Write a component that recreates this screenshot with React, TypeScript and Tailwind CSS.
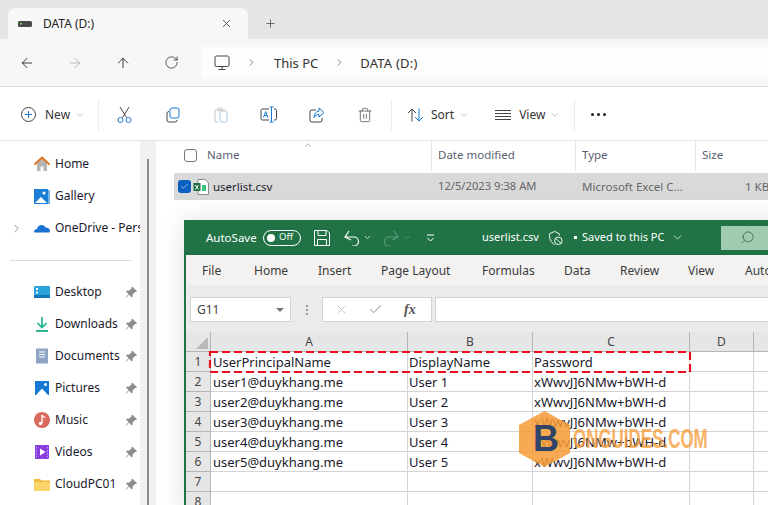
import React from "react";
import { ArrowLeft, ArrowRight, ArrowUp, RotateCw, ChevronRight, ChevronDown, ChevronUp, X, Plus, Trash2, Search, Check } from "lucide-react";

const Chev = () => <ChevronDown size={10} strokeWidth={1.5} className="text-[#9a9a9a]" />;

const Tile = ({ children }: { children?: React.ReactNode }) => (
  <svg width="18" height="18" viewBox="0 0 18 18" fill="none">{children}</svg>
);

const HomeI = () => (
  <Tile>
    <path d="M4 8v8h10V8L9 3z" fill="#b8b4b0" />
    <path d="M7.500 16v-4.500h3V16z" fill="#fff" />
    <path d="M1.500 9.500L9 2.500l7.500 7" stroke="#e0701c" strokeWidth="1.800" fill="none" />
  </Tile>
);
const GalleryI = () => (
  <Tile>
    <rect x="1" y="2" width="14" height="15" fill="#1c7ed6" />
    <path d="M16 3v14" stroke="#1c7ed6" strokeWidth="1.200" />
    <path d="M2 16l6-6 6 6z" fill="#fff" />
    <circle cx="11" cy="6" r="1.500" fill="#fff" />
  </Tile>
);
const CloudI = () => (
  <Tile>
    <path d="M1 13c0-2 1.500-3 3-3 .5-2.500 2.500-4 4.500-4 2 0 3.500 1 4 2.500 2.500 0 4.500 1.500 4.500 3.500 0 .5-.2 1-.5 1.500H1.500z" fill="#1a73d1" />
  </Tile>
);
const DesktopI = () => (
  <Tile>
    <rect x="1" y="3" width="16" height="12" rx="1" fill="#2aa4d8" />
    <rect x="1" y="12" width="16" height="3" fill="#1478b8" />
    <rect x="3" y="5" width="2" height="2" fill="#fff" />
    <rect x="3" y="8.500" width="2" height="2" fill="#dff" />
  </Tile>
);
const DownloadI = () => (
  <Tile>
    <path d="M9 2v10M4.500 8L9 12.500 13.500 8" stroke="#17b08a" strokeWidth="1.600" />
    <path d="M3 16h12" stroke="#17b08a" strokeWidth="1.800" />
  </Tile>
);
const DocsI = () => (
  <Tile>
    <rect x="3" y="1.500" width="12" height="15" fill="#8ea6c4" />
    <path d="M6 5h6M6 7.500h6M6 10h6" stroke="#fff" />
  </Tile>
);
const PicturesI = () => (
  <Tile>
    <rect x="2" y="2" width="14" height="14" fill="#1479d4" />
    <path d="M3 16l6-6.500L15 16z" fill="#fff" />
    <circle cx="12.500" cy="5.500" r="1.500" fill="#fff" />
  </Tile>
);
const MusicI = () => (
  <Tile>
    <circle cx="9" cy="9" r="8" fill="#d9695c" />
    <path d="M9 4v8" stroke="#fff" strokeWidth="1.400" />
    <circle cx="7.500" cy="12.500" r="1.800" fill="#fff" />
    <path d="M9 4c1 1.500 2.500 1.500 3 3" stroke="#fff" strokeWidth="1.200" />
  </Tile>
);
const VideosI = () => (
  <Tile>
    <rect x="2" y="2" width="14" height="14" rx="1" fill="#8a3ee0" />
    <path d="M7 5.500v7l5.500-3.500z" fill="#fff" />
    <path d="M3.500 4v10M14.500 4v10" stroke="#c9a0f0" strokeDasharray="1.500 1.500" />
  </Tile>
);
const FolderI = () => (
  <Tile>
    <path d="M1 4h6l1.500 1.500H17V15a1 1 0 01-1 1H2a1 1 0 01-1-1z" fill="#f0b93a" />
    <rect x="1" y="7" width="16" height="9" rx="1" fill="#fad56a" />
  </Tile>
);
const PinI = () => (
  <svg width="13" height="13" viewBox="0 0 13 13" fill="#8c8c8c" className="shrink-0">
    <path d="M7.500 .8l4.700 4.700-1.300.6-.8-.2-2.500 2.500.1 2-1 1L4 8.700 1.500 11.500l-.4-.1L1 11l2.600-2.700L1.100 5.600l1-1 2 .1 2.500-2.500-.2-.8z" />
  </svg>
);

const side1 = [
  { n: "Home", i: <HomeI /> },
  { n: "Gallery", i: <GalleryI /> },
  { n: "OneDrive - Personal", i: <CloudI />, c: true },
];
const side2 = [
  { n: "Desktop", i: <DesktopI /> },
  { n: "Downloads", i: <DownloadI /> },
  { n: "Documents", i: <DocsI /> },
  { n: "Pictures", i: <PicturesI /> },
  { n: "Music", i: <MusicI /> },
  { n: "Videos", i: <VideosI /> },
  { n: "CloudPC01", i: <FolderI /> },
];

const SideRow = ({ n, i, c, pin }: { n: string; i: React.ReactNode; c?: boolean; pin?: boolean }) => (
  <div className="flex h-8 items-center">
    <div className="flex w-[33px] shrink-0 justify-center">
      {c && <ChevronRight size={13} strokeWidth={1.5} className="text-[#777]" />}
    </div>
    <div className="flex w-[22px] shrink-0">{i}</div>
    <span className="min-w-0 flex-1 overflow-hidden whitespace-nowrap text-[12px] text-[#1a1a2b]">{n}</span>
    {pin && <span className="mx-[2px] flex"><PinI /></span>}
  </div>
);

const rows: string[][] = [
  ["UserPrincipalName", "DisplayName", "Password"],
  ["user1@duykhang.me", "User 1", "xWwvJ]6NMw+bWH-d"],
  ["user2@duykhang.me", "User 2", "xWwvJ]6NMw+bWH-d"],
  ["user3@duykhang.me", "User 3", "xWwvJ]6NMw+bWH-d"],
  ["user4@duykhang.me", "User 4", "xWwvJ]6NMw+bWH-d"],
  ["user5@duykhang.me", "User 5", "xWwvJ]6NMw+bWH-d"],
  ["", "", ""],
  ["", "", ""],
];

const ribbon = [
  ["File", "w-[52px] ml-[16px]"],
  ["Home", "w-[64px]"],
  ["Insert", "w-[63px]"],
  ["Page Layout", "w-[101px]"],
  ["Formulas", "w-[82px]"],
  ["Data", "w-[56px]"],
  ["Review", "w-[68px]"],
  ["View", "w-[57px]"],
  ["Automate", "w-[70px]"],
];

export default function App() {
  return (
    <div className="relative flex h-[505px] w-[768px] flex-col overflow-hidden bg-white font-['Noto_Sans',sans-serif]">
      {/* tab strip */}
      <div className="flex h-[39px] shrink-0 items-end bg-[#e6e6e6] pl-2">
        <div className="flex h-[31px] w-[240px] items-center rounded-t-lg bg-[#f8f8f8] pl-[10px] pr-[15px]">
          <svg width="14" height="6" viewBox="0 0 14 6" className="mr-[11px]">
            <rect width="14" height="6" rx="1.500" fill="#4a4a4a" />
            <rect x="2" y="2" width="2" height="1.500" fill="#6fe04a" />
          </svg>
          <span className="flex-1 text-[12px] text-[#222]">DATA (D:)</span>
          <X size={13} strokeWidth={1.3} className="text-[#222]" />
        </div>
        <div className="ml-4 flex h-[31px] items-center">
          <Plus size={13} strokeWidth={1.2} className="text-[#333]" />
        </div>
      </div>

      {/* nav */}
      <div className="flex h-[48px] shrink-0 items-center border-b border-[#dcdcdc] bg-[#f7f7f7]">
        <div className="flex w-[201px] items-center">
          <ArrowLeft size={16} strokeWidth={1.3} className="ml-[19px] text-[#222]" />
          <ArrowRight size={16} strokeWidth={1.3} className="ml-[32px] text-[#b0b0b0]" />
          <ArrowUp size={16} strokeWidth={1.3} className="ml-[32px] text-[#222]" />
          <RotateCw size={15} strokeWidth={1.3} className="ml-[33px] text-[#333]" />
        </div>
        <div className="flex h-8 flex-1 items-center bg-[#fdfdfd] pl-[13px] text-[13px] text-[#333]">
          <svg width="16" height="16" viewBox="0 0 16 16" fill="none" stroke="#444" strokeWidth="1">
            <rect x="1" y="1" width="14" height="10.500" rx="1.500" />
            <path d="M8 11.500V14M4.500 14.500h7" />
          </svg>
          <ChevronRight size={11} strokeWidth={1.3} className="ml-[16px] text-[#333]" />
          <span className="ml-[17px] pt-[2px]">This PC</span>
          <ChevronRight size={11} strokeWidth={1.3} className="ml-[16px] text-[#333]" />
          <span className="ml-[15px] pt-[2px] tracking-[0.2px]">DATA (D:)</span>
        </div>
      </div>

      {/* command bar */}
      <div className="flex h-[54px] shrink-0 items-center border-b border-[#e4e4e4] bg-white pt-[2px] text-[12px] text-[#333]">
        <div className="flex h-[32px] w-[99px] items-center border-r border-[#ececec] pl-[21px]">
          <svg width="15" height="15" viewBox="0 0 15 15" fill="none">
            <circle cx="7.500" cy="7.500" r="7" stroke="#444" />
            <path d="M7.500 4v7M4 7.500h7" stroke="#1a7ad4" />
          </svg>
          <span className="ml-[9px]">New</span>
          <span className="ml-[5px]"><Chev /></span>
        </div>
        <svg width="15" height="17" viewBox="0 0 15 17" fill="none" className="ml-[18px]">
          <path d="M3 1l6.500 10.500M12 1L5.500 11.500" stroke="#444" />
          <circle cx="3.500" cy="14" r="2.500" stroke="#1a7ad4" />
          <circle cx="11.500" cy="14" r="2.500" stroke="#1a7ad4" />
        </svg>
        <svg width="16" height="16" viewBox="0 0 16 16" fill="none" className="ml-[33px]">
          <rect x="5" y="1" width="9" height="10" rx="2" stroke="#1a7ad4" />
          <path d="M4 4.500a2 2 0 00-2 2V13a2 2 0 002 2h6a2 2 0 002-2" stroke="#444" />
        </svg>
        <svg width="16" height="16" viewBox="0 0 16 16" fill="none" className="ml-[32px]">
          <rect x="7" y="4" width="7" height="11" rx="1.500" stroke="#a8cbe8" />
          <path d="M5 15H2V3h10M5 1h4v2.500H5z" stroke="#c8c8c8" />
        </svg>
        <svg width="18" height="18" viewBox="0 0 18 18" fill="none" className="ml-[31px]">
          <path d="M9 3H2.500a1.500 1.500 0 00-1.500 1.500v8A1.500 1.500 0 002.500 14H9M14 3h1a1.500 1.500 0 011.500 1.500v8A1.500 1.500 0 0115 14h-1" stroke="#444" />
          <path d="M11.500 1v15M9.500 1h4M9.500 16h4" stroke="#1a7ad4" />
          <path d="M3.500 11.500l2.200-6 2.200 6M4.300 9.500h2.800" stroke="#1a7ad4" />
        </svg>
        <svg width="16" height="16" viewBox="0 0 16 16" fill="none" className="ml-[31px]">
          <path d="M7 3H3a2 2 0 00-2 2v8a2 2 0 002 2h8a2 2 0 002-2v-2" stroke="#444" />
          <path d="M10 1l5 4.500L10 10V7.500c-2.500 0-4 1-5 3 0-3.500 2-6 5-6.500z" stroke="#1a7ad4" />
        </svg>
        <Trash2 size={16} strokeWidth={1.1} className="ml-[32px] text-[#444]" />
        <div className="ml-[18px] flex h-[32px] w-[184px] items-center border-x border-[#ececec]">
          <svg width="17" height="14" viewBox="0 0 17 14" fill="none" className="ml-[15px]">
            <path d="M5 13.500V1M1 5l4-4 4 4" stroke="#444" />
            <path d="M12 .5V13M8 9l4 4 4-4" stroke="#1a7ad4" />
          </svg>
          <span className="ml-[7px]">Sort</span>
          <span className="ml-[5px]"><Chev /></span>
          <svg width="16" height="10" viewBox="0 0 16 10" stroke="#444" className="ml-[26px]">
            <path d="M0 .5h16M0 3.500h16M0 6.500h16M0 9.500h16" />
          </svg>
          <span className="ml-[8px]">View</span>
          <span className="ml-[5px]"><Chev /></span>
        </div>
        <div className="ml-[16px] flex gap-[3px]">
          <span className="h-[3px] w-[3px] rounded-full bg-[#222]" />
          <span className="h-[3px] w-[3px] rounded-full bg-[#222]" />
          <span className="h-[3px] w-[3px] rounded-full bg-[#222]" />
        </div>
      </div>

      {/* body */}
      <div className="flex min-h-0 flex-1">
        <div className="w-[140px] shrink-0 pt-[7px]">
          {side1.map((s) => <SideRow key={s.n} {...s} />)}
          <div className="mb-[15px] ml-[10px] mt-[16px] h-px w-[122px] bg-[#dcdcdc]" />
          {side2.map((s) => <SideRow key={s.n} {...s} pin />)}
        </div>
        <div className="w-[16px] shrink-0 bg-[#f1f1f1] pl-[7px] pt-[18px]">
          <div className="h-full w-[2px] bg-[#8a8a8a]" />
        </div>
        <div className="min-w-0 flex-1 pl-[18px]">
          <div className="flex h-[30px] items-center text-[11.500px] text-[#5b5f72]">
            <div className="relative flex h-full w-[258px] items-center border-r border-[#e6e6e6] pb-[2px] pl-[10px]">
              <span className="h-[13px] w-[13px] rounded-[3px] border border-[#777]" />
              <span className="ml-[10px]">Name</span>
              <ChevronUp size={10} strokeWidth={1.3} className="absolute left-[129px] top-[-1px] text-[#666]" />
            </div>
            <div className="flex h-full w-[144px] items-center border-r border-[#e6e6e6] pb-[2px] pl-[6px]">Date modified</div>
            <div className="flex h-full w-[120px] items-center border-r border-[#e6e6e6] pb-[2px] pl-[6px]">Type</div>
            <div className="h-full pl-[6px] pt-[5px]">Size</div>
          </div>
          <div className="mt-[2px] flex h-[27px] items-center bg-[#d9d9d9] text-[11.500px] text-[#666]">
            <span className="ml-[4px] flex h-[13px] w-[13px] shrink-0 items-center justify-center rounded-[3px] bg-[#0a5fc0]">
              <Check size={9} strokeWidth={1.5} className="text-white" />
            </span>
            <svg width="16" height="16" viewBox="0 0 16 16" className="ml-[2px] shrink-0" fill="none">
              <path d="M5 .5h7l3.500 3.500v11.500H5z" fill="#fff" stroke="#888" />
              <rect x="0.500" y="4" width="7" height="8" fill="#1d6f42" />
              <path d="M2.300 6l3.200 4.500M5.500 6l-3.200 4.500" stroke="#fff" />
              <rect x="9" y="6" width="4" height="6" fill="#3cc47c" />
            </svg>
            <span className="ml-[4px] w-[225px] shrink-0 text-[11.500px] text-[#1a1a2b]">userlist.csv</span>
            <span className="w-[144px] shrink-0 whitespace-nowrap text-[11.200px]">12/5/2023 9:38 AM</span>
            <span className="w-[163px] shrink-0 whitespace-nowrap">Microsoft Excel C...</span>
            <span className="whitespace-nowrap">1 KB</span>
          </div>
        </div>
      </div>

      {/* Excel window */}
      <div className="absolute left-[184px] top-[220px] h-[300px] w-[600px] border-l-2 border-[#217346] bg-[#e9e9e9] shadow-[0_0_24px_rgba(0,0,0,0.12)]">
        <div className="flex h-[35px] items-center whitespace-nowrap bg-[#217346] text-[11.500px] text-white">
          <span className="ml-[20px] w-[50px]">AutoSave</span>
          <div className="ml-[7px] flex h-[16px] w-[38px] shrink-0 items-center rounded-full border border-white px-[3px]">
            <span className="h-[8px] w-[8px] rounded-full bg-white" />
            <span className="ml-[4px] text-[9.500px]">Off</span>
          </div>
          <svg width="16" height="16" viewBox="0 0 16 16" fill="none" stroke="#fff" className="ml-[13px] shrink-0">
            <path d="M.5.5h12.500l2.500 2.500v12.500H.5z" />
            <path d="M4 .5v5h8v-5M3.500 15.500V9.500h9v6" />
          </svg>
          <svg width="16" height="16" viewBox="0 0 16 16" fill="none" stroke="#fff" strokeWidth="1.200" className="ml-[14px] shrink-0">
            <path d="M1 7h9a4.500 4.500 0 010 9H8M5 1L1 7l6 3" />
          </svg>
          <ChevronDown size={9} strokeWidth={2} className="ml-[3px] shrink-0" />
          <svg width="16" height="16" viewBox="0 0 16 16" fill="none" stroke="#5e9c7b" strokeWidth="1.200" className="ml-[11px] shrink-0">
            <path d="M15 7H6a4.500 4.500 0 000 9h2M11 1l4 6-6 3" />
          </svg>
          <ChevronDown size={9} strokeWidth={2} className="ml-[4px] shrink-0 text-[#5e9c7b]" />
          <svg width="9" height="8" viewBox="0 0 9 8" stroke="#fff" fill="none" className="ml-[14px] shrink-0">
            <path d="M1 1h7M1.500 4l3 3 3-3" />
          </svg>
          <span className="ml-[47px] w-[58px] text-[11px]">userlist.csv</span>
          <svg width="16" height="16" viewBox="0 0 17 17" fill="none" stroke="#fff" className="ml-[8px] shrink-0">
            <path d="M7 1.500L1.500 4c0 5 1 9 5.500 11.500" />
            <path d="M7 1.500L12 4v2" />
            <circle cx="11" cy="11.500" r="4" />
            <path d="M8.500 9l5 5" />
          </svg>
          <span className="ml-[10px] h-[3px] w-[3px] shrink-0 bg-white" />
          <span className="ml-[5px] w-[85px] text-[11px]">Saved to this PC</span>
          <ChevronDown size={13} strokeWidth={1.3} className="ml-[4px] shrink-0" />
          <div className="ml-[37px] flex h-[24px] w-[60px] shrink-0 items-center bg-[#a0cbb0] pl-[19px]">
            <Search size={15} strokeWidth={1.1} className="-scale-x-100 text-[#1e5c3a]" />
          </div>
        </div>
        <div className="flex h-[30px] items-center whitespace-nowrap bg-[#f3f2f1] pt-[1px] text-[12px] text-[#3a3a3a] shadow-[0_1px_3px_rgba(0,0,0,0.15)]">
          {ribbon.map(([t, c]) => <span key={t} className={c + " shrink-0"}>{t}</span>)}
        </div>
        <div className="flex h-[47px] items-start bg-[#ebebeb] pt-[12px] text-[12px]">
          <div className="ml-[4px] flex h-[25px] w-[101px] items-center border border-[#d4d4d4] bg-white pl-[6px] text-[#444]">
            <span className="flex-1">G11</span>
            <span className="mr-[6px] h-0 w-0 border-x-[4px] border-t-[4px] border-x-transparent border-t-[#777]" />
          </div>
          <div className="ml-[15px] mt-[8px] flex flex-col gap-[2px]">
            <span className="h-[2px] w-[2px] bg-[#999]" />
            <span className="h-[2px] w-[2px] bg-[#999]" />
            <span className="h-[2px] w-[2px] bg-[#999]" />
          </div>
          <div className="ml-[14px] flex h-[25px] w-[110px] items-center border border-[#d4d4d4] bg-white pl-[12px] text-[#bcbcbc]">
            <X size={13} strokeWidth={1.5} />
            <Check size={15} strokeWidth={2.2} className="ml-[20px]" />
            <span className="ml-[21px] font-['Liberation_Serif',serif] text-[14px] font-bold italic text-[#555]">fx</span>
          </div>
          <div className="ml-[3px] h-[25px] flex-1 border border-[#d4d4d4] bg-white" />
        </div>
        <div className="grid grid-cols-[25px_197px_125px_157px_64px_1fr] bg-white text-[13px] text-[#1a1a2b]">
          <div className="flex h-5 items-end justify-end border-b border-r border-[#b5b5b5] bg-[#e6e6e6] p-[2px]">
            <span className="h-0 w-0 border-b-[12px] border-l-[12px] border-b-[#b8b8b8] border-l-transparent" />
          </div>
          {["A", "B", "C", "D", "E"].map((c) => (
            <div key={c} className="flex h-5 items-center justify-center border-b border-r border-[#b5b5b5] bg-[#e6e6e6] text-[12px] text-[#444]">
              {c === "E" ? "" : c}
            </div>
          ))}
          {rows.map((r, i) => (
            <React.Fragment key={i}>
              <div className="flex h-5 items-center justify-center border-b border-r border-[#b5b5b5] bg-[#e6e6e6] text-[12px] text-[#444]">{i + 1}</div>
              {r.map((v, j) => (
                <div key={j} className={"flex h-5 items-center overflow-hidden whitespace-nowrap border-b border-r border-[#d4d4d4] pt-[2px] " + (j === 0 ? "pl-[2px]" : "pl-[1px]")}>{v}</div>
              ))}
              <div className="h-5 border-b border-r border-[#d4d4d4]" />
              <div className="h-5 border-b border-[#d4d4d4]" />
            </React.Fragment>
          ))}
        </div>
      </div>

      {/* red dashed highlight */}
      <svg className="absolute left-[208px] top-[350px]" width="484" height="24" fill="none">
        <rect x="2" y="2" width="480" height="20" stroke="#e8101c" strokeWidth="2.200" strokeDasharray="8 4" />
      </svg>

      {/* watermark */}
      <div className="absolute left-[519px] top-[411px] flex h-[56px] items-center">
        <div className="relative h-[56px] w-[51px] shrink-0">
          <svg width="51" height="56" viewBox="0 0 51 56" className="absolute inset-0">
            <path d="M25.500 0L51 14v28L25.500 56 0 42V14z" fill="#f79a35" fillOpacity="0.85" />
          </svg>
          <span className="absolute left-[14px] top-[6px] font-['Liberation_Sans',sans-serif] text-[36px] font-bold leading-[44px] text-[#2f4468]">B</span>
        </div>
        <span className="ml-[3px] origin-left scale-x-[0.628] whitespace-nowrap font-['Liberation_Sans',sans-serif] text-[27px] font-bold leading-none text-[#f79a35] opacity-75">ONGUIDES.COM</span>
      </div>
    </div>
  );
}
